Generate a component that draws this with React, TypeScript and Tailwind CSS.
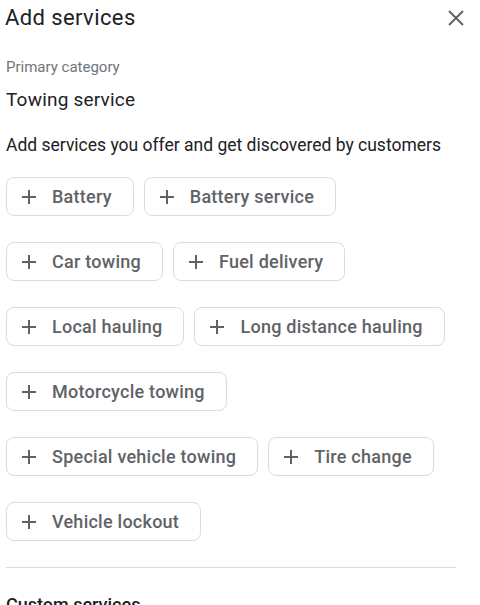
const services: string[][] = [
  ["Battery", "Battery service"],
  ["Car towing", "Fuel delivery"],
  ["Local hauling", "Long distance hauling"],
  ["Motorcycle towing"],
  ["Special vehicle towing", "Tire change"],
  ["Vehicle lockout"],
];

function PlusIcon() {
  return (
    <svg width="14" height="14" viewBox="0 0 14 14" className="shrink-0">
      <path d="M7 0v14M0 7h14" stroke="#5f6368" strokeWidth="2" />
    </svg>
  );
}

function Chip({ label }: { label: string }) {
  return (
    <button className="flex h-[39px] items-center gap-4 rounded-lg border border-[#dadce0] bg-white pl-[15px] pr-[21px] text-[18px] font-medium tracking-[0.25px] text-[#5f6368]">
      <PlusIcon />
      <span>{label}</span>
    </button>
  );
}

export default function App() {
  return (
    <div className="h-[605px] w-[480px] overflow-hidden bg-white font-['Roboto',sans-serif]">
      <div className="flex items-center justify-between pl-[5px] pr-[16px] pt-[4px]">
        <h1 className="text-[22px] leading-[28px] tracking-[0.4px] text-[#202124]">Add services</h1>
        <svg width="16" height="16" viewBox="0 0 16 16">
          <path d="M1 1l14 14M15 1L1 15" stroke="#5f6368" strokeWidth="2" />
        </svg>
      </div>

      <div className="px-[6px]">
        <p className="mt-[25px] text-[15px] leading-[20px] text-[#70757a]">Primary category</p>
        <p className="mt-[11px] text-[19px] leading-[24px] tracking-[0.2px] text-[#202124]">Towing service</p>
        <p className="mt-[22px] text-[17.5px] leading-[22px] text-[#202124]">
          Add services you offer and get discovered by customers
        </p>

        <div className="mt-[21px] flex flex-col gap-[26px]">
          {services.map((row) => (
            <div key={row[0]} className="flex gap-[10px]">
              {row.map((s) => (
                <Chip key={s} label={s} />
              ))}
            </div>
          ))}
        </div>

        <div className="mt-[26px] mr-[18px] border-t border-[#dadce0]" />
        <p className="mt-[25px] text-[18px] font-medium leading-[24px] text-[#202124]">Custom services</p>
      </div>
    </div>
  );
}
